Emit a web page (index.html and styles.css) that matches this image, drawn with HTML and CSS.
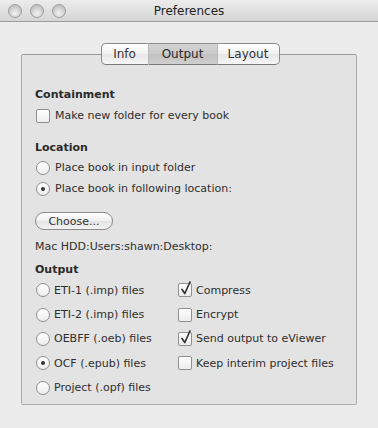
FILE: index.html
```html
<!DOCTYPE html>
<html lang="en">
<head>
  <meta charset="UTF-8" />
  <title>Preferences</title>
  <link rel="stylesheet" href="styles.css">
</head>
<body>
  <div class="window">
    <div class="titlebar">
      <div class="lights">
        <span class="light"></span>
        <span class="light"></span>
        <span class="light"></span>
      </div>
      <div class="title">Preferences</div>
    </div>

    <div class="content">
      <div class="tabs">
        <span class="tab first">Info</span>
        <span class="tab selected">Output</span>
        <span class="tab last">Layout</span>
      </div>

      <div class="panel">
        <div class="heading head-containment">Containment</div>
        <label class="row">
          <span class="check"></span>
          Make new folder for every book
        </label>

        <div class="heading head-location">Location</div>
        <label class="row">
          <span class="radio"></span>
          Place book in input folder
        </label>
        <label class="row">
          <span class="radio on"></span>
          Place book in following location:
        </label>

        <button class="choose">Choose...</button>
        <div class="path">Mac HDD:Users:shawn:Desktop:</div>

        <div class="heading head-output">Output</div>
        <div class="options">
          <div class="col">
            <label class="orow"><span class="radio"></span>ETI-1 (.imp) files</label>
            <label class="orow"><span class="radio"></span>ETI-2 (.imp) files</label>
            <label class="orow"><span class="radio"></span>OEBFF (.oeb) files</label>
            <label class="orow"><span class="radio on"></span>OCF (.epub) files</label>
            <label class="orow"><span class="radio"></span>Project (.opf) files</label>
          </div>
          <div class="col">
            <label class="orow"><span class="check on"><svg viewBox="0 0 14 16" width="14" height="16"><path d="M3 9.5 L5.8 13.5 L11 2" fill="none" stroke="#333" stroke-width="1.7" stroke-linecap="round" stroke-linejoin="round"/></svg></span>Compress</label>
            <label class="orow"><span class="check"></span>Encrypt</label>
            <label class="orow"><span class="check on"><svg viewBox="0 0 14 16" width="14" height="16"><path d="M3 9.5 L5.8 13.5 L11 2" fill="none" stroke="#333" stroke-width="1.7" stroke-linecap="round" stroke-linejoin="round"/></svg></span>Send output to eViewer</label>
            <label class="orow"><span class="check"></span>Keep interim project files</label>
          </div>
        </div>
      </div>
    </div>
  </div>
</body>
</html>
```

FILE: styles.css
```css
html, body {
  margin: 0;
  padding: 0;
}
body {
  font-family: "Lucida Grande", "DejaVu Sans", sans-serif;
  font-size: 11px;
  color: #2e2e2e;
  background: #ececec;
}
.window {
  width: 378px;
  height: 428px;
  background: #ececec;
  overflow: hidden;
}

/* Title bar */
.titlebar {
  height: 21px;
  display: flex;
  align-items: center;
  position: relative;
  background: linear-gradient(#ececec, #d6d6d6);
  border-bottom: 1px solid #9c9c9c;
}
.lights {
  display: flex;
  gap: 8px;
  padding-left: 8px;
}
.light {
  box-sizing: border-box;
  width: 14px;
  height: 14px;
  border-radius: 50%;
  border: 1px solid #9d9d9d;
  background: radial-gradient(circle at 50% 70%, #f4f4f4, #c4c4c4 70%);
}
.title {
  position: absolute;
  left: 0;
  right: 0;
  text-align: center;
  font-size: 12px;
  color: #222;
}

/* Tabs + panel */
.content {
  padding: 21px 20px 0 21px;
}
.tabs {
  position: relative;
  z-index: 1;
  display: flex;
  justify-content: center;
  margin-left: 1px;
  height: 22px;
  margin-bottom: -11px;
}
.tab {
  display: flex;
  align-items: center;
  justify-content: center;
  height: 20px;
  font-size: 12px;
  color: #333;
  border-top: 1px solid #8c8c8c;
  border-bottom: 1px solid #7a7a7a;
  border-right: 1px solid #b9b9b9;
  background: linear-gradient(#ffffff, #f1f1f1 50%, #e6e6e6 51%, #f6f6f6);
}
.tab.first {
  width: 46px;
  border-left: 1px solid #8c8c8c;
  border-radius: 5px 0 0 5px;
}
.tab.selected {
  width: 68px;
  background: linear-gradient(#d3d3d3, #cacaca 50%, #c1c1c1 51%, #d0d0d0);
  color: #2a2a2a;
}
.tab.last {
  width: 61px;
  border-right: 1px solid #8c8c8c;
  border-radius: 0 5px 5px 0;
}
.panel {
  box-sizing: border-box;
  width: 336px;
  height: 351px;
  background: #e3e3e3;
  border: 1px solid #acacac;
  border-top-color: #9b9b9b;
  border-radius: 2px;
  padding: 32px 13px 0 13px;
}
.heading {
  font-weight: bold;
  line-height: 16px;
  color: #2a2a2a;
}
.head-location { margin-top: 14px; }
.head-output { margin-top: 7px; }
.row {
  display: flex;
  align-items: center;
  height: 21px;
  gap: 5px;
  padding-left: 1px;
}
.head-containment + .row { margin-top: 2px; }
.head-location + .row { margin-top: 1px; }

.check, .radio {
  box-sizing: border-box;
  flex: none;
  width: 14px;
  height: 14px;
  border: 1px solid #8f8f8f;
  background: linear-gradient(#ffffff, #ededed);
  position: relative;
}
.check { border-radius: 2px; }
.radio { border-radius: 50%; }
.radio.on::after {
  content: "";
  position: absolute;
  left: 4px;
  top: 4px;
  width: 4px;
  height: 4px;
  border-radius: 50%;
  background: #333;
}
.check svg {
  position: absolute;
  left: 0;
  top: -4px;
}

.choose {
  display: block;
  margin-top: 13px;
  width: 78px;
  height: 18px;
  padding: 0;
  border: 1px solid #8a8a8a;
  border-radius: 9px;
  background: linear-gradient(#ffffff, #f0f0f0 50%, #e4e4e4 51%, #f3f3f3);
  font-family: inherit;
  font-size: 11px;
  color: #333;
}
.path {
  margin-top: 9px;
  line-height: 16px;
}

.options {
  display: grid;
  grid-template-columns: 142px 1fr;
  margin-top: 0;
}
.col {
  display: flex;
  flex-direction: column;
}
.orow {
  display: flex;
  align-items: center;
  height: 24.4px;
  gap: 4px;
  padding-left: 1px;
}
```
